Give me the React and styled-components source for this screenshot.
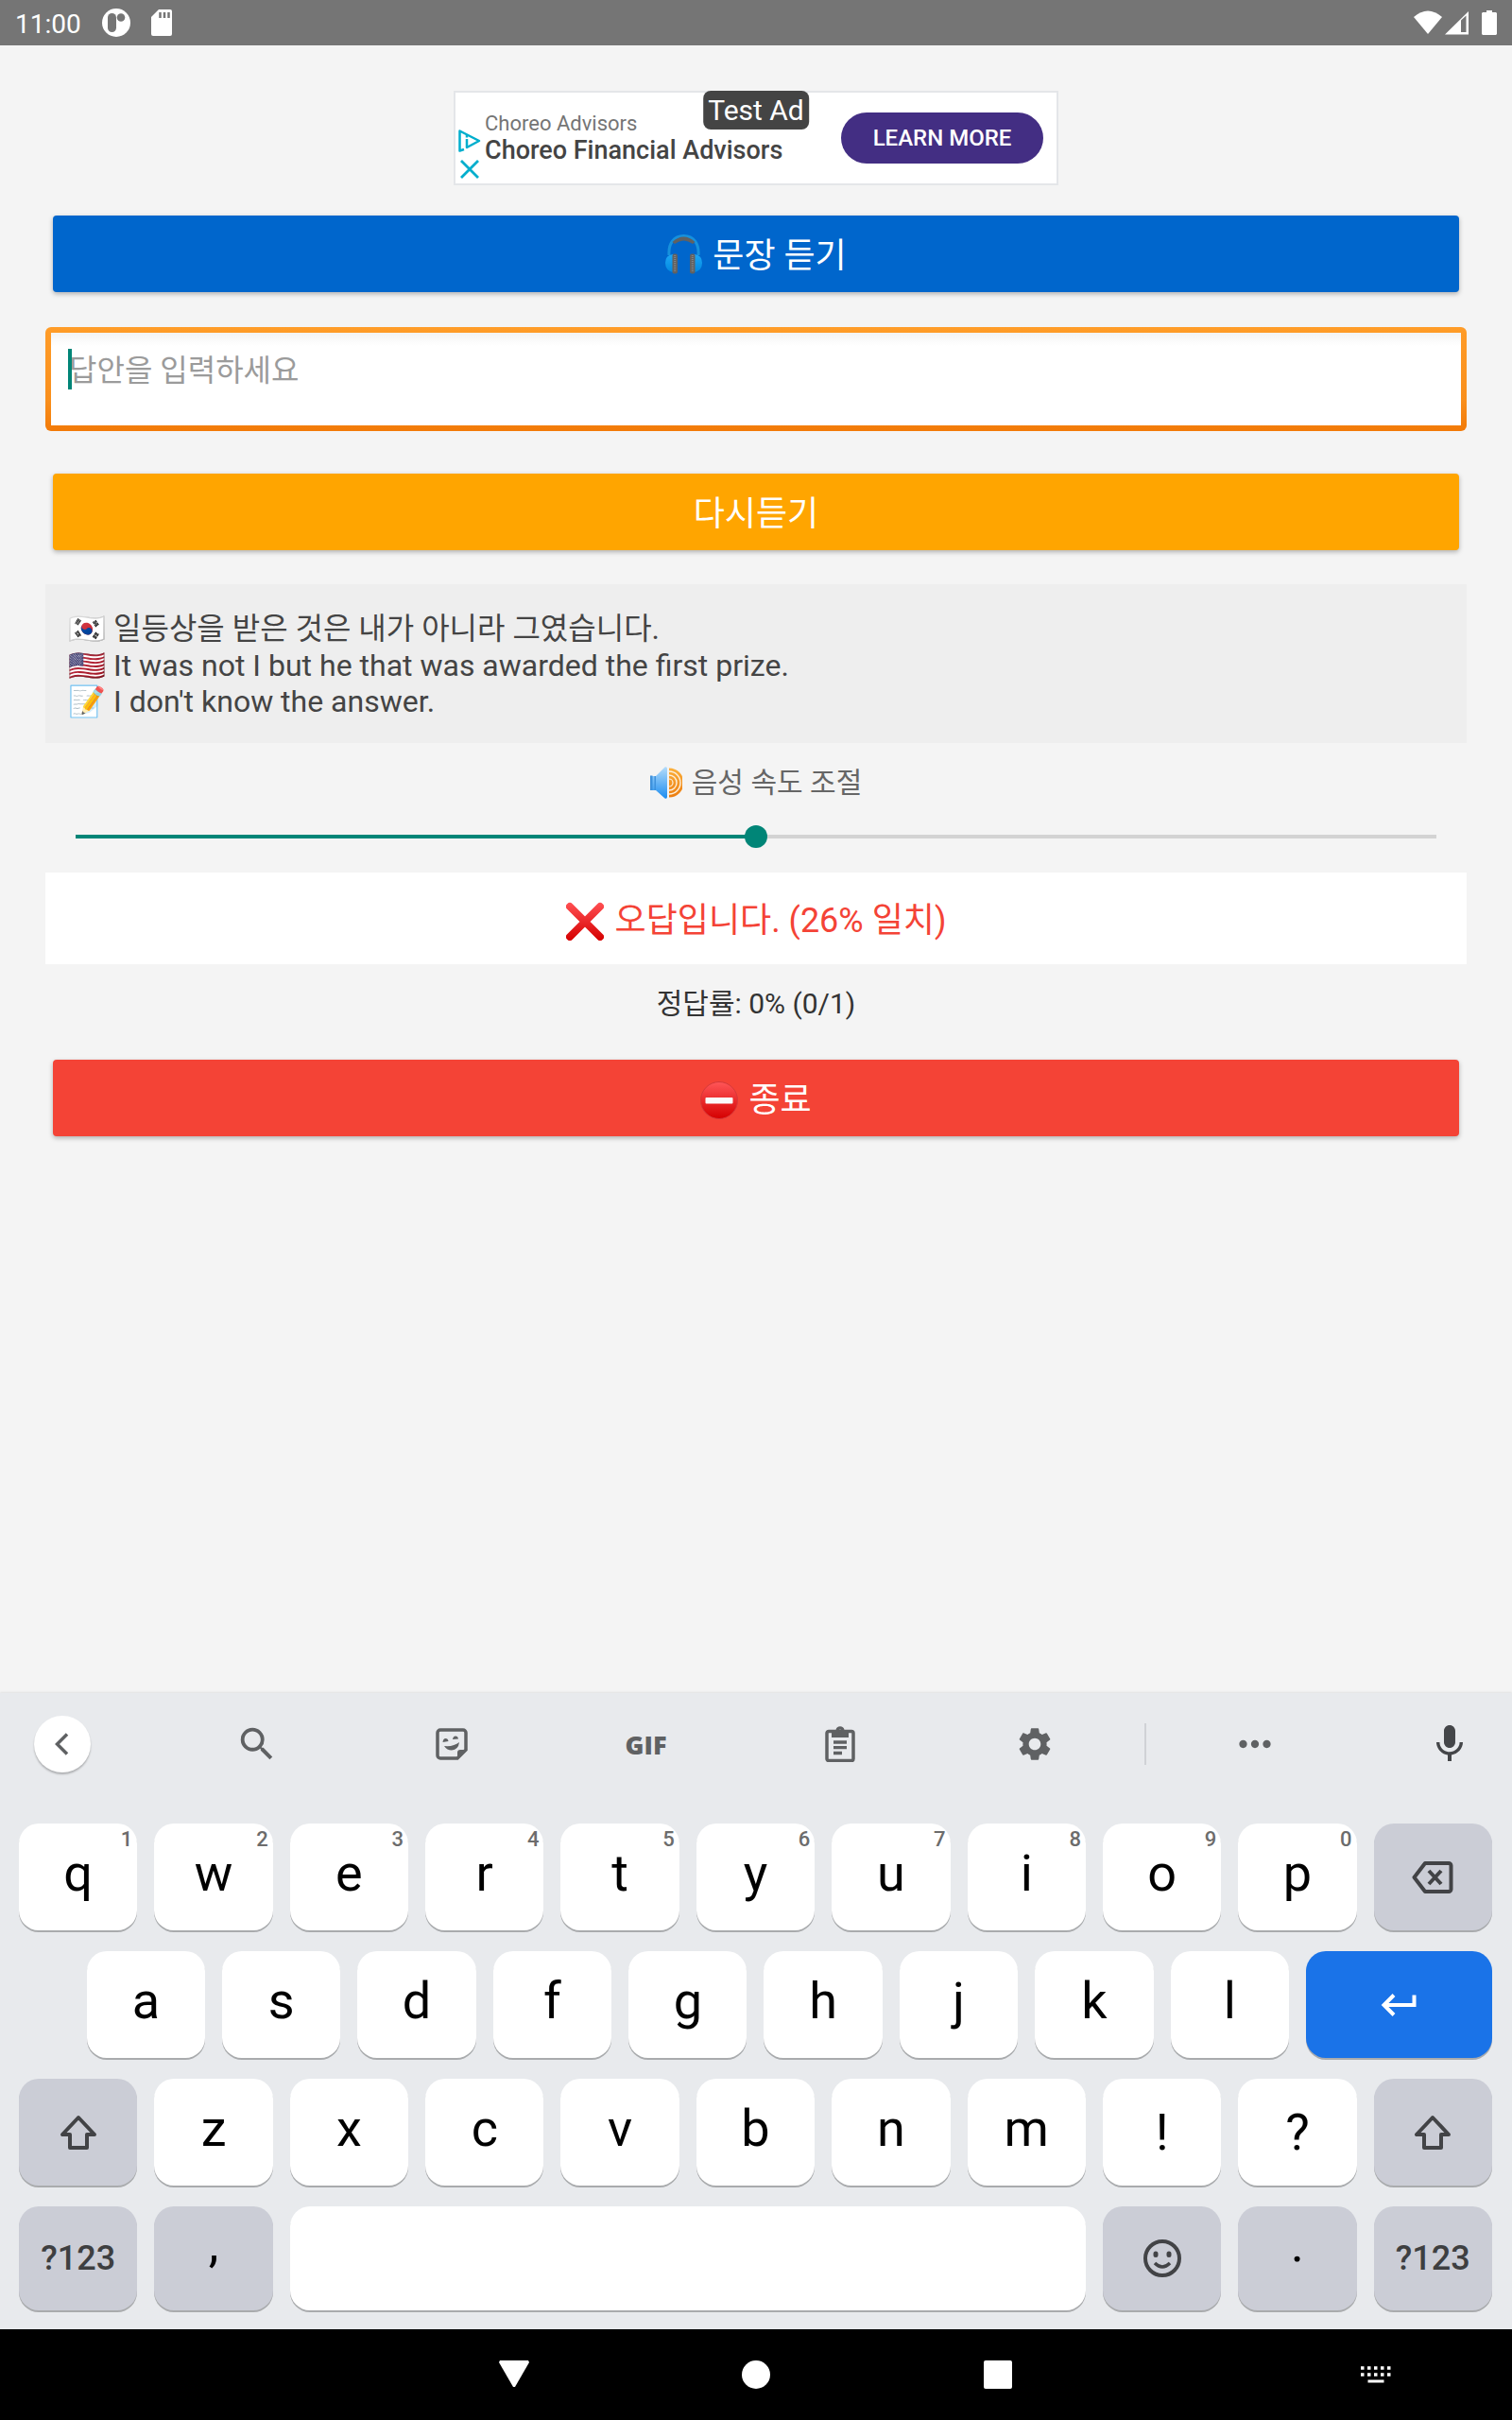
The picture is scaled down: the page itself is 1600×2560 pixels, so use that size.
import React, { useState } from "react";
import styled, { createGlobalStyle } from "styled-components";
import { MdSearch, MdSettings, MdMic, MdMoreHoriz } from "react-icons/md";

const GlobalStyle = createGlobalStyle`
  *, *::before, *::after { box-sizing: border-box; }
  body { margin: 0; background: #f4f4f4; }
  body, button, input { font-family: Roboto, "Noto Sans CJK KR", sans-serif; }
  button { border: 0; padding: 0; cursor: pointer; }
  svg { display: block; flex: none; }
`;

const Screen = styled.div`
  display: flex;
  flex-direction: column;
  min-height: 100vh;
`;

/* Status bar */
const StatusBar = styled.header`
  display: flex;
  align-items: center;
  justify-content: space-between;
  height: 48px;
  padding: 0 16px;
  background: #757575;
  color: #fff;
  font-size: 28px;
`;
const StatusGroup = styled.div`
  display: flex;
  align-items: center;
  gap: ${(p) => p.$gap}px;
`;
const Clock = styled.span`
  padding-top: 3px;
`;

/* Practice page */
const Main = styled.main`
  flex: 1;
  display: flex;
  flex-direction: column;
  padding: 48px;
`;

const AdBanner = styled.aside`
  position: relative;
  display: flex;
  align-items: center;
  align-self: center;
  width: 640px;
  max-width: 100%;
  height: 100px;
  padding: 0 14px 0 3px;
  margin-bottom: 32px;
  background: #fff;
  border: 2px solid #e4e6e9;
`;
const AdMarks = styled.div`
  display: flex;
  flex-direction: column;
  align-self: flex-end;
  gap: 8px;
  width: 28px;
  padding-bottom: 5px;
`;
const AdText = styled.div`
  flex: 1;
`;
const Advertiser = styled.div`
  font-size: 22px;
  line-height: 26px;
  color: #757575;
`;
const AdTitle = styled.div`
  font-size: 27px;
  line-height: 30px;
  font-weight: 500;
  color: #444;
`;
const AdTag = styled.span`
  position: absolute;
  top: -2px;
  left: 50%;
  transform: translateX(-50%);
  padding: 0 5px;
  border-radius: 8px;
  background: #444;
  color: #fff;
  font-size: 30px;
  line-height: 41px;
  white-space: nowrap;
`;
const AdAction = styled.button`
  width: 214px;
  height: 54px;
  border-radius: 27px;
  background: #432e83;
  color: #fff;
  font-size: 24px;
  font-weight: 500;
`;

const ActionButton = styled.button`
  display: flex;
  align-items: center;
  justify-content: center;
  gap: 11px;
  height: 81px;
  margin: 0 8px;
  border-radius: 4px;
  background: ${(p) => p.$color};
  color: #fff;
  font-size: 36px;
  box-shadow: 0 2px 5px rgba(0, 0, 0, 0.28);
`;
const Caption = styled.span`
  padding-bottom: 4px;
`;

const AnswerField = styled.div`
  position: relative;
  margin: 37px 0 45px;
`;
const AnswerInput = styled.input`
  display: block;
  width: 100%;
  height: 110px;
  padding: 0 19px 18px;
  border: 6px solid transparent;
  border-radius: 6px;
  background:
    linear-gradient(#f4f4f4, #fff 14px) padding-box,
    linear-gradient(#ff9c28, #f98f1c 70%, #f27a08) border-box;
  color: #333;
  font-size: 32px;
  outline: 0;
  &::placeholder { color: #9b9b9b; opacity: 1; }
`;
const Caret = styled.span`
  position: absolute;
  top: 23px;
  left: 24px;
  width: 4px;
  height: 43px;
  background: #008577;
`;

const Sentences = styled.section`
  margin-top: 36px;
  padding: 27px 24px 25px;
  background: #eee;
  color: #444;
  font-size: 32px;
`;
const Sentence = styled.p`
  display: flex;
  align-items: center;
  gap: 8px;
  margin: 0;
  line-height: ${(p) => (p.$tall ? 40 : 38)}px;
`;

const SpeedLabel = styled.label`
  display: flex;
  align-items: center;
  justify-content: center;
  gap: 10px;
  margin: 24px 0 27px;
  color: #666;
  font-size: 30px;
  line-height: 36px;
`;
const SpeedSlider = styled.input`
  appearance: none;
  height: 24px;
  margin: 0 32px 26px;
  background: transparent;
  &::-webkit-slider-runnable-track {
    height: 4px;
    background: linear-gradient(to right, #008577 ${(p) => p.value}%, #d3d3d3 0);
  }
  &::-webkit-slider-thumb {
    appearance: none;
    width: 24px;
    height: 24px;
    margin-top: -10px;
    border-radius: 50%;
    background: #008577;
  }
`;

const Result = styled.p`
  display: flex;
  align-items: center;
  justify-content: center;
  gap: 12px;
  height: 97px;
  margin: 0;
  background: #fff;
  color: #f44336;
  font-size: 36px;
`;
const Score = styled.p`
  margin: 22px 0 39px;
  text-align: center;
  color: #333;
  font-size: 30px;
  line-height: 40px;
`;

/* On-screen keyboard */
const Keyboard = styled.section`
  padding-bottom: 20px;
  background: #e8eaed;
  box-shadow: 0 -1px 2px rgba(0, 0, 0, 0.08);
`;
const Toolbar = styled.div`
  display: grid;
  grid-template-columns: repeat(5, 206fr) 233fr 206fr 60px;
  padding: 24px 36px 54px;
`;
const ToolCell = styled.div`
  display: flex;
  align-items: center;
`;
const ToolButton = styled.button`
  display: grid;
  place-items: center;
  width: 60px;
  height: 60px;
  border-radius: 50%;
  background: ${(p) => (p.$raised ? "#fff" : "transparent")};
  box-shadow: ${(p) => (p.$raised ? "0 2px 2px rgba(0, 0, 0, 0.25)" : "none")};
  color: ${(p) => (p.$dark ? "#444649" : "#5f6163")};
  font-family: "Open Sans", sans-serif;
  font-size: 27px;
  font-weight: 800;
`;
const Divider = styled.span`
  width: 2px;
  height: 44px;
  margin: 0 auto;
  background: #d0d2d6;
`;
const KeyRow = styled.div`
  display: grid;
  grid-template-columns: repeat(22, 1fr);
  padding: 0 12px 0 11px;
  & + & { margin-top: 22px; }
`;
const keyColors = { letter: "#fff", function: "#cbcdd6", enter: "#1a73e8" };
const Key = styled.button`
  position: relative;
  display: flex;
  align-items: center;
  justify-content: center;
  grid-column: ${(p) => (p.$start ? `${p.$start} / ` : "")} span ${(p) => p.$span || 2};
  height: ${(p) => (p.$short ? 110 : 113)}px;
  margin: 0 9px;
  padding-bottom: ${(p) => p.$lift || 0}px;
  border-radius: 21px;
  background: ${(p) => keyColors[p.$kind || "letter"]};
  box-shadow: 0 2px 0 #a9abad;
  color: #000;
  font-size: 54px;
`;
const KeyHint = styled.span`
  position: absolute;
  top: 4px;
  right: 5px;
  color: #6c6c6c;
  font-size: 22px;
  line-height: 26px;
  font-weight: 500;
`;
const ModeLabel = styled.span`
  color: #3e3f41;
  font-size: 36px;
  font-weight: 500;
`;

/* System navigation */
const NavBar = styled.nav`
  display: grid;
  grid-template-columns: 1fr repeat(3, 16%) 1fr;
  height: 96px;
  background: #000;
`;
const NavButton = styled.button`
  display: grid;
  align-items: center;
  justify-content: ${(p) => (p.$end ? "end" : "center")};
  padding-right: ${(p) => (p.$end ? 128 : 0)}px;
  grid-column-start: ${(p) => p.$col};
  background: transparent;
`;

const Line = ({ width, height, box, weight = 2, children }) => (
  <svg width={width} height={height} viewBox={box} fill="none" stroke="#424346" strokeWidth={weight} strokeLinejoin="round">
    {children}
  </svg>
);
const ShiftIcon = () => (
  <Line width="40" height="40" box="0 0 40 40" weight="4">
    <path d="M20 4 3 22h8v14h18V22h8z" />
  </Line>
);

const HeadphonesIcon = () => (
  <svg width="39" height="42" viewBox="0 0 39 42">
    <defs>
      <linearGradient id="cup" x2="0" y2="1">
        <stop offset="0" stopColor="#1ea7f5" />
        <stop offset="1" stopColor="#0288e0" />
      </linearGradient>
    </defs>
    <path d="M4 22C3 10 9 1.500 19.500 1.500S36 10 35 22" fill="none" stroke="#1791dc" strokeWidth="3" />
    <path d="M7.500 8Q19.500-3 31.500 8L29 10Q19.500 3 10 10z" fill="#616161" />
    <path d="M8 21v19Q0 38 0 30t8-9zM31 21v19q8-2 8-10t-8-9z" fill="url(#cup)" />
    <rect x="7.500" y="20.500" width="5.500" height="21" rx="2" fill="#616161" />
    <rect x="26" y="20.500" width="5.500" height="21" rx="2" fill="#616161" />
    <path d="M10.200 22v18M28.800 22v18" stroke="#858585" strokeWidth="2" strokeDasharray="1 1" />
  </svg>
);
const SpeakerIcon = () => (
  <svg width="34" height="34" viewBox="0 0 34 34">
    <defs>
      <linearGradient id="cone" x2="0" y2="1">
        <stop offset="0" stopColor="#b4dcfb" />
        <stop offset="1" stopColor="#1c8df0" />
      </linearGradient>
      <linearGradient id="wave" x2="0" y2="1">
        <stop offset="0" stopColor="#fbb03c" />
        <stop offset="1" stopColor="#ec7d10" />
      </linearGradient>
    </defs>
    <path d="M0 10h6L15.500.5Q18-.5 18 2v30q0 2.500-2.500 1.500L6 25H0z" fill="url(#cone)" />
    <path d="M0 9.500h2.500V25H0zM4.500 10H6v15H4.500z" fill="#3f92dc" />
    <path d="M20 1.500a15.500 15.500 0 0 1 0 31z" fill="url(#wave)" />
    <g fill="none" stroke="#fdf0dc">
      <path d="M20 5a12 12 0 0 1 0 24M20 9a8 8 0 0 1 0 16" strokeWidth="1.400" />
      <path d="M20 13a4 4 0 0 1 0 8" strokeWidth="1.200" />
    </g>
  </svg>
);
const CrossIcon = () => (
  <svg width="40" height="46" viewBox="0 -6 40 46">
    <defs>
      <linearGradient id="cross" gradientUnits="userSpaceOnUse" x1="0" y1="0" x2="0" y2="40">
        <stop offset="0" stopColor="#ff4f52" />
        <stop offset="1" stopColor="#d50000" />
      </linearGradient>
    </defs>
    <path d="m4 4 32 32M36 4 4 36" stroke="url(#cross)" strokeWidth="8" strokeLinecap="round" />
  </svg>
);
const NoEntryIcon = () => (
  <svg width="40" height="44" viewBox="0 -4 40 44">
    <defs>
      <linearGradient id="entry" x2="0" y2="1">
        <stop offset="0" stopColor="#ff5658" />
        <stop offset="1" stopColor="#d50000" />
      </linearGradient>
    </defs>
    <circle cx="20" cy="20" r="19.500" fill="url(#entry)" stroke="#d5393a" strokeWidth="1" />
    <rect x="5.500" y="17" width="29" height="6.500" rx="1" fill="#fafafa" />
  </svg>
);

const topRow = "qwertyuiop".split("");
const homeRow = "asdfghjkl".split("");
const bottomRow = "zxcvbnm".split("");

export default function App() {
  const [speed, setSpeed] = useState(50);
  const [answer, setAnswer] = useState("");
  return (
    <Screen>
      <GlobalStyle />
      <StatusBar>
        <StatusGroup $gap={22}>
          <Clock>11:00</Clock>
          <svg width="30" height="30" viewBox="0 0 30 30">
            <circle cx="15" cy="15" r="15" fill="#fff" />
            <rect x="6" y="5" width="9" height="20" rx="4.500" fill="#757575" />
            <circle cx="20" cy="9.500" r="4.300" fill="#757575" />
          </svg>
          <svg width="22" height="28" viewBox="0 0 22 28">
            <path d="M8 0h12a2 2 0 0 1 2 2v24a2 2 0 0 1-2 2H2a2 2 0 0 1-2-2V8z" fill="#fff" />
            <path d="M9.500 3v6M14 3v6M18.500 3v6" stroke="#757575" strokeWidth="2.500" />
          </svg>
        </StatusGroup>
        <StatusGroup $gap={3}>
          <svg width="30" height="26" viewBox="0 0 30 26">
            <path d="M0 7Q15-6 30 7L15 25z" fill="#fff" />
          </svg>
          <svg width="25" height="26" viewBox="0 0 25 26">
            <path fillRule="evenodd" d="M0 25.500 25 1v24.500zM17 10.500V23h5.500V5.500z" fill="#fff" />
          </svg>
          <svg width="27" height="26" viewBox="-11 0 27 26">
            <path d="M5 0h6v2h4l1 1v22l-1 1H1l-1-1V3l1-1h4z" fill="#fff" />
          </svg>
        </StatusGroup>
      </StatusBar>

      <Main>
        <AdBanner>
          <AdMarks>
            <svg width="24" height="24" viewBox="0 0 24 24" fill="none" stroke="#00aecd">
              <path d="M6 21 1.500 22.500V1.500L22 12 9 19V10" strokeWidth="2.500" strokeLinejoin="round" />
              <path d="M9 6v2.500" strokeWidth="2.500" />
            </svg>
            <svg width="24" height="20" viewBox="0 0 24 20" stroke="#00aecd" strokeWidth="2.800">
              <path d="m3 1 18 18M21 1 3 19" />
            </svg>
          </AdMarks>
          <AdText>
            <Advertiser>Choreo Advisors</Advertiser>
            <AdTitle>Choreo Financial Advisors</AdTitle>
          </AdText>
          <AdTag>Test Ad</AdTag>
          <AdAction>LEARN MORE</AdAction>
        </AdBanner>

        <ActionButton $color="#0066cc"><HeadphonesIcon /><Caption>문장 듣기</Caption></ActionButton>
        <AnswerField>
          <AnswerInput
            aria-label="답안"
            placeholder="답안을 입력하세요"
            value={answer}
            onChange={(e) => setAnswer(e.target.value)}
          />
          <Caret />
        </AnswerField>
        <ActionButton $color="#ffa500"><Caption>다시듣기</Caption></ActionButton>

        <Sentences>
          <Sentence $tall><span>🇰🇷</span>일등상을 받은 것은 내가 아니라 그였습니다.</Sentence>
          <Sentence><span>🇺🇸</span>It was not I but he that was awarded the first prize.</Sentence>
          <Sentence><span>📝</span>I don't know the answer.</Sentence>
        </Sentences>

        <SpeedLabel htmlFor="speed"><SpeakerIcon />음성 속도 조절</SpeedLabel>
        <SpeedSlider id="speed" type="range" min="0" max="100" value={speed} onChange={(e) => setSpeed(e.target.value)} />

        <Result><CrossIcon /><Caption>오답입니다. (26% 일치)</Caption></Result>
        <Score>정답률: 0% (0/1)</Score>
        <ActionButton $color="#f44336"><NoEntryIcon /><Caption>종료</Caption></ActionButton>
      </Main>

      <Keyboard>
        <Toolbar>
          <ToolCell>
            <ToolButton $raised aria-label="Back">
              <svg width="24" height="24" viewBox="0 0 24 24" fill="none" stroke="currentColor" strokeWidth="3.500">
                <path d="M17 1.500 6.500 12 17 22.500" />
              </svg>
            </ToolButton>
          </ToolCell>
          <ToolCell><ToolButton aria-label="Search"><MdSearch size={46} /></ToolButton></ToolCell>
          <ToolCell>
            <ToolButton aria-label="Stickers">
              <svg width="34" height="34" viewBox="0 0 34 34">
                <path d="M5 2h24a3 3 0 0 1 3 3v18l-9 9H5a3 3 0 0 1-3-3V5a3 3 0 0 1 3-3z" fill="none" stroke="currentColor" strokeWidth="3.500" />
                <path d="M23 33v-7a3 3 0 0 1 3-3h7z" fill="currentColor" />
                <path d="M9 19q10 1 16-4-1 8-8 8.500-5 0-8-4.500zM7.500 15q.5-4 3-4t3 3zM18 12q.5-3.500 3-3.500t3 3z" fill="currentColor" />
              </svg>
            </ToolButton>
          </ToolCell>
          <ToolCell><ToolButton>GIF</ToolButton></ToolCell>
          <ToolCell>
            <ToolButton aria-label="Clipboard">
              <svg width="32" height="38" viewBox="0 0 32 38">
                <path d="M4 5.500h24a2 2 0 0 1 2 2v27a2 2 0 0 1-2 2H4a2 2 0 0 1-2-2v-27a2 2 0 0 1 2-2z" fill="none" stroke="currentColor" strokeWidth="3.500" />
                <path fillRule="evenodd" d="M7 4h4.500a4.600 4.600 0 0 1 9 0H25v8H7zM16 3.500a1.600 1.600 0 1 0 0 3.200 1.600 1.600 0 0 0 0-3.200z" fill="currentColor" />
                <path d="M9 17h14M9 22.700h14M9 28.500h9" stroke="currentColor" strokeWidth="3.300" />
              </svg>
            </ToolButton>
          </ToolCell>
          <ToolCell>
            <ToolButton aria-label="Settings"><MdSettings size={42} /></ToolButton>
            <Divider />
          </ToolCell>
          <ToolCell><ToolButton aria-label="More"><MdMoreHoriz size={50} /></ToolButton></ToolCell>
          <ToolCell><ToolButton $dark aria-label="Voice input"><MdMic size={48} /></ToolButton></ToolCell>
        </Toolbar>

        <KeyRow>
          {topRow.map((k, i) => (
            <Key key={k} $lift={8}>{k}<KeyHint>{(i + 1) % 10}</KeyHint></Key>
          ))}
          <Key $kind="function" aria-label="Backspace">
            <Line width="44" height="36" box="0 0 44 36" weight="4">
              <path d="M14 3h25a2.500 2.500 0 0 1 2.500 2.500v25A2.500 2.500 0 0 1 39 33H14L2.500 18z" />
              <path d="m18 11 13 14M31 11 18 25" />
            </Line>
          </Key>
        </KeyRow>
        <KeyRow>
          {homeRow.map((k, i) => (
            <Key key={k} $lift={8} $start={i === 0 ? 2 : 0}>{k}</Key>
          ))}
          <Key $kind="enter" $span={3} aria-label="Enter">
            <svg width="38" height="24" viewBox="0 0 38 24" fill="none" stroke="#fff" strokeWidth="4">
              <path d="M35.500 1.500V12H3M14 1.500 3.500 12 14 22.500" />
            </svg>
          </Key>
        </KeyRow>
        <KeyRow>
          <Key $kind="function" aria-label="Shift"><ShiftIcon /></Key>
          {bottomRow.map((k) => <Key key={k} $lift={8}>{k}</Key>)}
          <Key>!</Key>
          <Key>?</Key>
          <Key $kind="function" aria-label="Shift"><ShiftIcon /></Key>
        </KeyRow>
        <KeyRow>
          <Key $short $kind="function"><ModeLabel>?123</ModeLabel></Key>
          <Key $short $kind="function" $lift={32}>,</Key>
          <Key $short $span={12} aria-label="Space" />
          <Key $short $kind="function" aria-label="Emoji">
            <Line width="40" height="40" box="0 0 40 40" weight="4">
              <circle cx="20" cy="20" r="18" />
              <path d="M12 25q8 8 16 0" strokeWidth="3.500" />
              <path d="M13 15v1.500M27 15v1.500" strokeWidth="5" strokeLinecap="round" />
            </Line>
          </Key>
          <Key $short $kind="function" $lift={32}>.</Key>
          <Key $short $kind="function"><ModeLabel>?123</ModeLabel></Key>
        </KeyRow>
      </Keyboard>

      <NavBar>
        <NavButton $col={2} aria-label="Hide keyboard">
          <svg width="32" height="30" viewBox="0 0 32 30"><path d="M1 0h30l1 2-15 26h-2L0 2z" fill="#fff" /></svg>
        </NavButton>
        <NavButton $col={3} aria-label="Home">
          <svg width="30" height="30" viewBox="0 0 30 30"><circle cx="15" cy="15" r="15" fill="#fff" /></svg>
        </NavButton>
        <NavButton $col={4} aria-label="Recent apps">
          <svg width="30" height="30" viewBox="0 0 30 30"><rect width="30" height="30" rx="2" fill="#fff" /></svg>
        </NavButton>
        <NavButton $col={5} $end aria-label="Switch keyboard">
          <svg width="32" height="18" viewBox="0 0 32 18" stroke="#fff">
            <path d="M0 2h32M0 9h32" strokeWidth="3.500" strokeDasharray="3.500 3.500" />
            <path d="M7.500 16h17" strokeWidth="3" />
          </svg>
        </NavButton>
      </NavBar>
    </Screen>
  );
}
